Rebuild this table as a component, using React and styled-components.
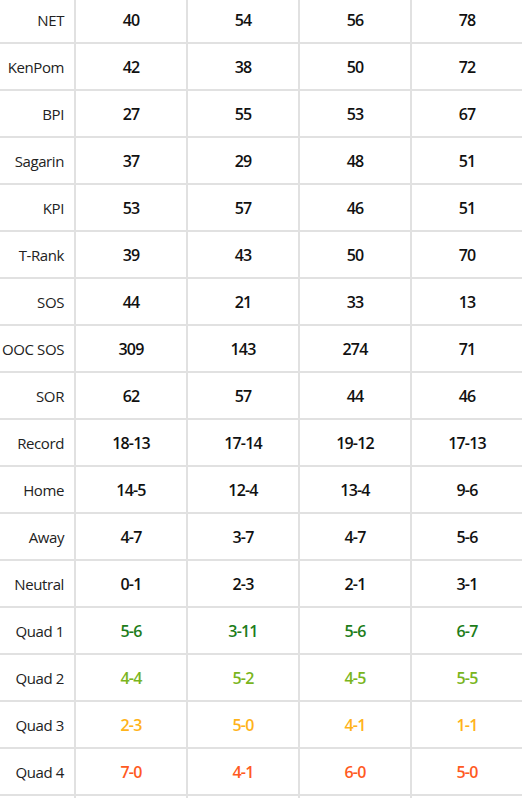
import React from 'react'
import styled, { createGlobalStyle } from 'styled-components'

const GlobalStyle = createGlobalStyle`
  body {
    margin: 0;
    background: #fff;
    font-family: "Open Sans", "Noto Sans", sans-serif;
    overflow: hidden;
  }
`

const Grid = styled.div`
  display: grid;
  grid-template-columns: 74px repeat(4, 110px);
  grid-auto-rows: 45px;
  gap: 2px;
  width: 522px;
  margin-top: -5px;
  padding-top: 2px;
  background: #e1e1e1;
`

const Label = styled.div`
  display: flex;
  align-items: center;
  justify-content: flex-end;
  padding-right: 10px;
  background: #fff;
  font-size: 15px;
  color: #222;
  letter-spacing: -0.4px;
  white-space: nowrap;
`

const Value = styled.div`
  display: flex;
  align-items: center;
  justify-content: center;
  background: #fff;
  font-size: 16px;
  font-weight: 600;
  letter-spacing: -0.8px;
  color: ${p => p.$color || '#111'};
`

const quadColors = {
  'Quad 1': '#1d7d1a',
  'Quad 2': '#7ab51d',
  'Quad 3': '#ffb31a',
  'Quad 4': '#ff5a22',
}

const rows = [
  ['NET', '40', '54', '56', '78'],
  ['KenPom', '42', '38', '50', '72'],
  ['BPI', '27', '55', '53', '67'],
  ['Sagarin', '37', '29', '48', '51'],
  ['KPI', '53', '57', '46', '51'],
  ['T-Rank', '39', '43', '50', '70'],
  ['SOS', '44', '21', '33', '13'],
  ['OOC SOS', '309', '143', '274', '71'],
  ['SOR', '62', '57', '44', '46'],
  ['Record', '18-13', '17-14', '19-12', '17-13'],
  ['Home', '14-5', '12-4', '13-4', '9-6'],
  ['Away', '4-7', '3-7', '4-7', '5-6'],
  ['Neutral', '0-1', '2-3', '2-1', '3-1'],
  ['Quad 1', '5-6', '3-11', '5-6', '6-7'],
  ['Quad 2', '4-4', '5-2', '4-5', '5-5'],
  ['Quad 3', '2-3', '5-0', '4-1', '1-1'],
  ['Quad 4', '7-0', '4-1', '6-0', '5-0'],
  ['', '', '', '', ''],
]

export default function App() {
  return (
    <>
      <GlobalStyle />
      <Grid>
        {rows.map(([label, ...vals], i) => (
          <React.Fragment key={i}>
            <Label>{label}</Label>
            {vals.map((v, j) => (
              <Value key={j} $color={quadColors[label]}>{v}</Value>
            ))}
          </React.Fragment>
        ))}
      </Grid>
    </>
  )
}
